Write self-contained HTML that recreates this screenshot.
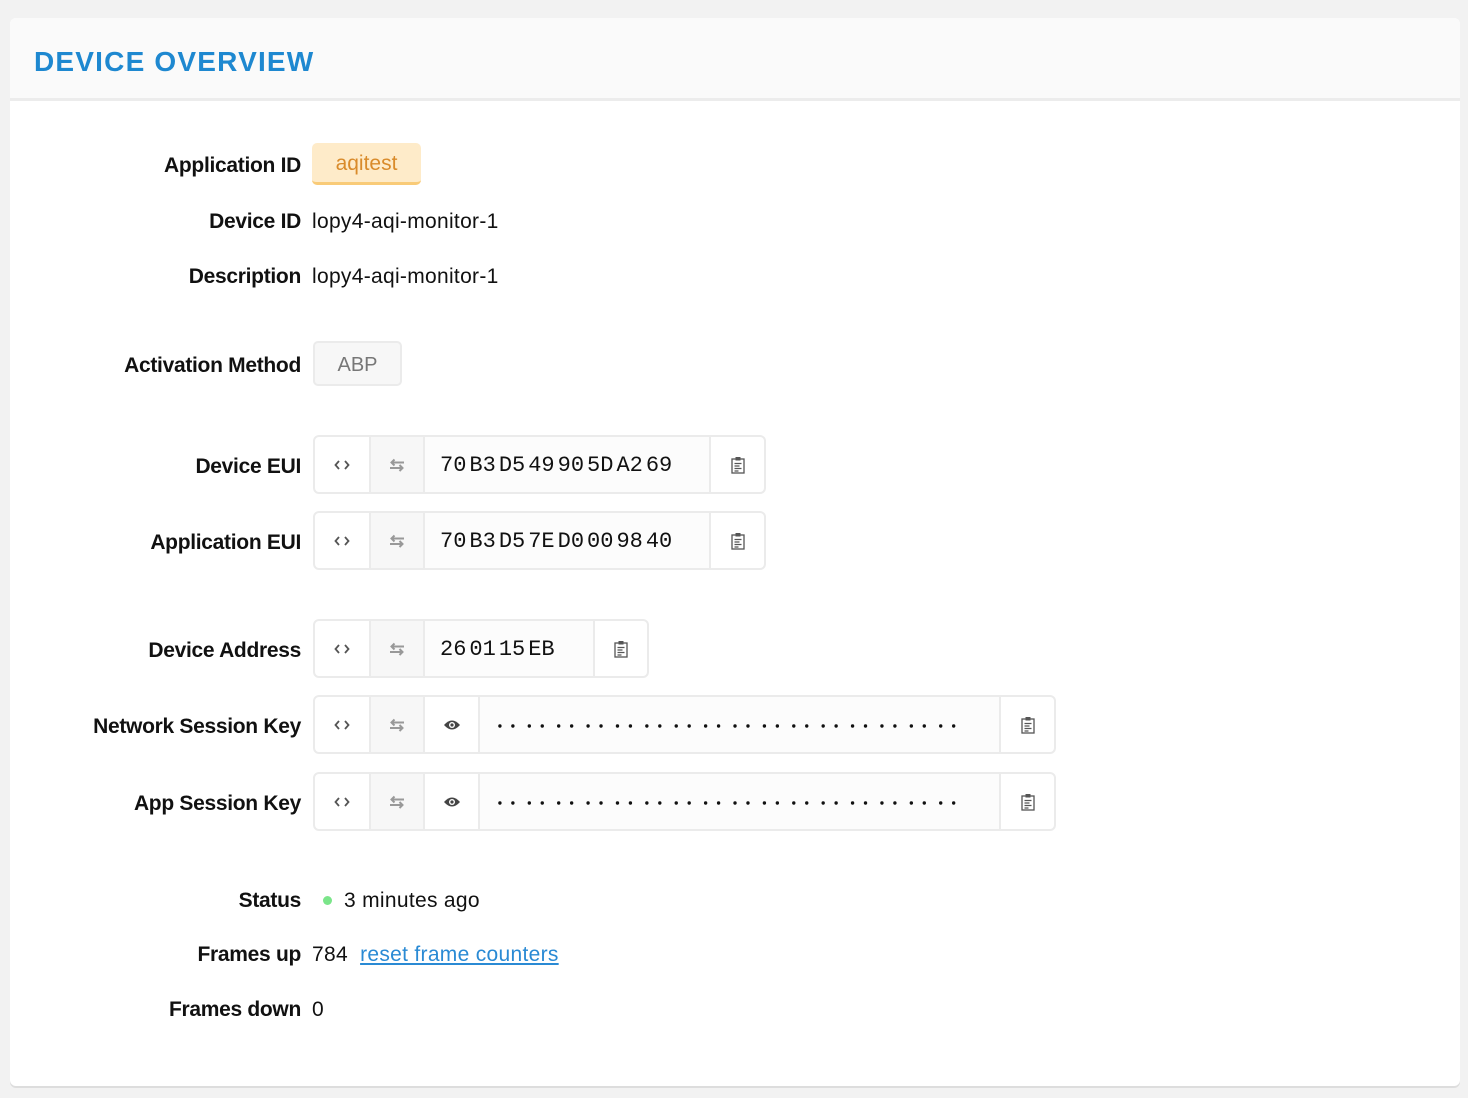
<!DOCTYPE html>
<html><head><meta charset="utf-8"><style>
*{margin:0;padding:0;box-sizing:border-box}
body{width:1468px;height:1098px;background:#f2f2f2;font-family:"Liberation Sans",sans-serif;position:relative;overflow:hidden}
.card{position:absolute;left:10px;top:18px;width:1450px;height:1068px;background:#fff;border-radius:6px;box-shadow:0 2px 0 #ddd}
.hdr{position:absolute;left:10px;top:18px;width:1450px;height:83px;background:#fafafa;border-bottom:3px solid #ececec;border-radius:6px 6px 0 0}
.title{position:absolute;left:34px;top:45px;font-size:28px;font-weight:bold;color:#1e88d0;letter-spacing:1.2px;line-height:34px}
.lbl{position:absolute;left:0;width:301px;text-align:right;font-size:21px;font-weight:bold;color:#111;line-height:24px;letter-spacing:-0.3px;margin-top:1px}
.val{position:absolute;left:312px;font-size:21px;color:#111;line-height:24px;letter-spacing:0.3px;margin-top:1px}
.box{position:absolute;left:313px;height:59px;border:2px solid #ebebeb;border-radius:6px;background:#fff;display:flex;overflow:hidden}
.c{height:100%;border-right:2px solid #ebebeb;display:flex;align-items:center;justify-content:center;flex:none}
.c:last-child{border-right:none}
.s{background:#f7f7f7}
.hex{justify-content:flex-start;padding-left:15px;padding-top:2px;background:#fcfcfc;font-family:"Liberation Mono",monospace;font-size:22px;color:#111}
.hex span{margin-right:3px}
.dots{background:#fcfcfc;justify-content:flex-start}
</style></head><body>
<div class="card"></div>
<div class="hdr"></div>
<div class="title">DEVICE OVERVIEW</div>

<div class="lbl" style="top:153px">Application ID</div>
<div style="position:absolute;left:312px;top:143px;width:109px;height:42px;background:#feebc9;border-bottom:3px solid #f9cb78;border-radius:5px;color:#d98b2b;font-size:21px;text-align:center;line-height:41px">aqitest</div>
<div class="lbl" style="top:209px">Device ID</div><div class="val" style="top:209px">lopy4-aqi-monitor-1</div>
<div class="lbl" style="top:264px">Description</div><div class="val" style="top:264px">lopy4-aqi-monitor-1</div>
<div class="lbl" style="top:353px">Activation Method</div>
<div style="position:absolute;left:313px;top:341px;width:89px;height:45px;border:2px solid #ebebeb;border-radius:5px;background:#f7f7f7;color:#777;font-size:20px;text-align:center;line-height:44px">ABP</div>

<svg width="0" height="0" style="position:absolute"><defs>
<symbol id="code" viewBox="0 0 16 12"><path d="M5 2 L1.5 6 L5 10 M11 2 L14.5 6 L11 10" fill="none" stroke="#555" stroke-width="1.8"/></symbol>
<symbol id="swap" viewBox="0 0 16 14"><path d="M15 4.5H3 M5.5 1.5 L2.5 4.5 L5.5 7.5 M1 10H13 M10.5 7 L13.5 10 L10.5 13" fill="none" stroke="#999" stroke-width="2"/></symbol>
<symbol id="eye" viewBox="0 0 18 12"><path d="M1 6 Q9 -3 17 6 Q9 15 1 6Z" fill="#444"/><circle cx="9" cy="6" r="3" fill="#fff"/><circle cx="9" cy="6" r="1.6" fill="#444"/></symbol>
<symbol id="clip" viewBox="0 0 14 18"><rect x="1" y="3" width="12" height="14" fill="none" stroke="#555" stroke-width="1.3"/><rect x="4.5" y="1" width="5" height="3.5" fill="#555"/><path d="M3.5 7.5h7M3.5 10h5M3.5 12.5h7M3.5 15h4" stroke="#555" stroke-width="1.2"/></symbol>
<symbol id="dots" viewBox="0 0 521 10">
<g fill="#111">
<circle cx="20" cy="5" r="1.7"/><circle cx="33" cy="5" r="1.7"/><circle cx="49.5" cy="5" r="1.7"/><circle cx="62.5" cy="5" r="1.7"/><circle cx="79" cy="5" r="1.7"/><circle cx="92" cy="5" r="1.7"/><circle cx="108.5" cy="5" r="1.7"/><circle cx="121.5" cy="5" r="1.7"/><circle cx="138" cy="5" r="1.7"/><circle cx="151" cy="5" r="1.7"/><circle cx="167.5" cy="5" r="1.7"/><circle cx="180.5" cy="5" r="1.7"/><circle cx="197" cy="5" r="1.7"/><circle cx="210" cy="5" r="1.7"/><circle cx="226.5" cy="5" r="1.7"/><circle cx="239.5" cy="5" r="1.7"/><circle cx="256" cy="5" r="1.7"/><circle cx="269" cy="5" r="1.7"/><circle cx="285.5" cy="5" r="1.7"/><circle cx="298.5" cy="5" r="1.7"/><circle cx="315" cy="5" r="1.7"/><circle cx="328" cy="5" r="1.7"/><circle cx="344.5" cy="5" r="1.7"/><circle cx="357.5" cy="5" r="1.7"/><circle cx="374" cy="5" r="1.7"/><circle cx="387" cy="5" r="1.7"/><circle cx="403.5" cy="5" r="1.7"/><circle cx="416.5" cy="5" r="1.7"/><circle cx="433" cy="5" r="1.7"/><circle cx="446" cy="5" r="1.7"/><circle cx="462.5" cy="5" r="1.7"/><circle cx="475.5" cy="5" r="1.7"/>
</g></symbol>
</defs></svg>

<div class="lbl" style="top:454px">Device EUI</div>
<div class="box" style="top:435px;width:453px">
<div class="c" style="width:56px"><svg width="16" height="12"><use href="#code"/></svg></div>
<div class="c s" style="width:54px"><svg width="16" height="14"><use href="#swap"/></svg></div>
<div class="c hex" style="width:286px"><span>70</span><span>B3</span><span>D5</span><span>49</span><span>90</span><span>5D</span><span>A2</span><span>69</span></div>
<div class="c" style="width:53px"><svg width="14" height="18"><use href="#clip"/></svg></div></div>

<div class="lbl" style="top:530px">Application EUI</div>
<div class="box" style="top:511px;width:453px">
<div class="c" style="width:56px"><svg width="16" height="12"><use href="#code"/></svg></div>
<div class="c s" style="width:54px"><svg width="16" height="14"><use href="#swap"/></svg></div>
<div class="c hex" style="width:286px"><span>70</span><span>B3</span><span>D5</span><span>7E</span><span>D0</span><span>00</span><span>98</span><span>40</span></div>
<div class="c" style="width:53px"><svg width="14" height="18"><use href="#clip"/></svg></div></div>

<div class="lbl" style="top:638px">Device Address</div>
<div class="box" style="top:619px;width:336px">
<div class="c" style="width:56px"><svg width="16" height="12"><use href="#code"/></svg></div>
<div class="c s" style="width:54px"><svg width="16" height="14"><use href="#swap"/></svg></div>
<div class="c hex" style="width:170px"><span>26</span><span>01</span><span>15</span><span>EB</span></div>
<div class="c" style="width:52px"><svg width="14" height="18"><use href="#clip"/></svg></div></div>

<div class="lbl" style="top:714px">Network Session Key</div>
<div class="box" style="top:695px;width:743px">
<div class="c" style="width:56px"><svg width="16" height="12"><use href="#code"/></svg></div>
<div class="c s" style="width:54px"><svg width="16" height="14"><use href="#swap"/></svg></div>
<div class="c" style="width:55px"><svg width="18" height="12"><use href="#eye"/></svg></div>
<div class="c dots" style="width:521px"><svg width="521" height="10" style="margin-top:3px"><use href="#dots"/></svg></div>
<div class="c" style="width:53px"><svg width="14" height="18"><use href="#clip"/></svg></div></div>

<div class="lbl" style="top:791px">App Session Key</div>
<div class="box" style="top:772px;width:743px">
<div class="c" style="width:56px"><svg width="16" height="12"><use href="#code"/></svg></div>
<div class="c s" style="width:54px"><svg width="16" height="14"><use href="#swap"/></svg></div>
<div class="c" style="width:55px"><svg width="18" height="12"><use href="#eye"/></svg></div>
<div class="c dots" style="width:521px"><svg width="521" height="10" style="margin-top:3px"><use href="#dots"/></svg></div>
<div class="c" style="width:53px"><svg width="14" height="18"><use href="#clip"/></svg></div></div>

<div class="lbl" style="top:888px">Status</div>
<div style="position:absolute;left:323px;top:896px;width:9px;height:9px;border-radius:50%;background:#7be58a"></div>
<div class="val" style="top:888px;left:344px">3 minutes ago</div>
<div class="lbl" style="top:942px">Frames up</div>
<div class="val" style="top:942px">784 <span style="color:#2a8ad4;text-decoration:underline;margin-left:6px">reset frame counters</span></div>
<div class="lbl" style="top:997px">Frames down</div><div class="val" style="top:997px">0</div>
</body></html>
